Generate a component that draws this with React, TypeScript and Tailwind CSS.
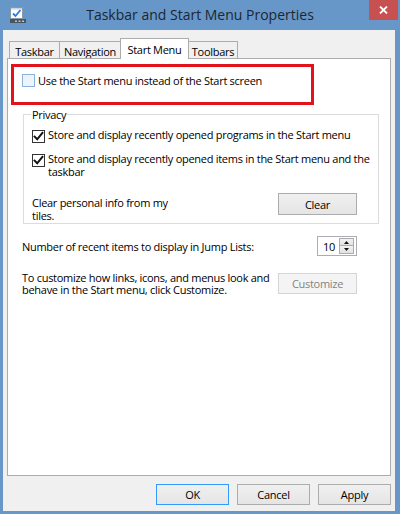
import React from "react";

const font = { fontFamily: '"Open Sans", "Noto Sans", sans-serif' };

function CheckBox({ checked, hot }: { checked?: boolean; hot?: boolean }) {
  return (
    <div
      className={
        "w-[13px] h-[13px] shrink-0 border flex items-center justify-center " +
        (hot ? "border-[#8AB2DC] bg-[#EEF4FB]" : "border-[#333333] bg-white")
      }
    >
      {checked && (
        <svg width="11" height="11" viewBox="0 0 11 11">
          <path d="M1.6 5.6 L4.2 8.3 L9.4 1.8" fill="none" stroke="#111" strokeWidth="2" strokeLinecap="square" />
        </svg>
      )}
    </div>
  );
}

function WinButton({ label, w, h = "h-[21px]", primary, disabled }: { label: string; w: string; h?: string; primary?: boolean; disabled?: boolean }) {
  let cls = "border-[#ACACAC] bg-gradient-to-b from-[#F0F0F0] to-[#E5E5E5] text-black";
  if (primary) cls = "border-[#3399FF] bg-gradient-to-b from-[#F0F0F0] to-[#E5E5E5] text-black";
  if (disabled) cls = "border-[#D5D5D5] bg-[#F4F4F4] text-[#838383]";
  return (
    <button className={`${w} ${h} shrink-0 border flex items-center justify-center text-[11px] tracking-[-0.28px] leading-none ${cls}`}>
      {label}
    </button>
  );
}

function Tab({ label, w, active, first }: { label: string; w: string; active?: boolean; first?: boolean }) {
  return (
    <div
      className={
        `${w} border border-b-0 border-[#ACACAC] flex justify-center text-[11px] tracking-[-0.28px] leading-[13px] ` +
        (first ? "" : "-ml-px ") +
        (active ? "h-[21px] bg-white relative z-10 -mb-px pt-[4px]" : "h-[17px] bg-[#F0F0F0] pt-[3px]")
      }
    >
      {label}
    </div>
  );
}

function AppIcon() {
  return (
    <svg width="16" height="17" viewBox="0 0 16 17">
      <rect x="0.5" y="0.5" width="12" height="11" fill="#fff" stroke="#8a99a8" />
      <rect x="1" y="1" width="11" height="1.5" fill="#c8d4e0" />
      <path d="M3 6.5 L5.5 9 L10.5 3" fill="none" stroke="#2a7fd4" strokeWidth="1.8" />
      <rect x="0" y="12" width="16" height="4" fill="#4a5360" />
      <rect x="5" y="13.5" width="2" height="1.5" fill="#b7c2cc" />
      <rect x="8.5" y="13.5" width="2" height="1.5" fill="#b7c2cc" />
      <rect x="12" y="13.5" width="2" height="1.5" fill="#b7c2cc" />
    </svg>
  );
}

export default function App() {
  return (
    <div className="w-[400px] h-[514px] bg-[#6797C8] flex flex-col overflow-hidden text-black" style={font}>
      {/* Title bar */}
      <div className="h-[30px] shrink-0 grid grid-cols-[1fr_auto_1fr]">
        <div className="pl-[10px] pt-[7px]">
          <AppIcon />
        </div>
        <div className="text-[14px] leading-[30px] text-[#1E2630]">Taskbar and Start Menu Properties</div>
        <div className="flex justify-end items-start pr-[2px]">
          <div className="w-[29px] h-[20px] bg-[#C75050] flex items-center justify-center">
            <svg width="9" height="8" viewBox="0 0 9 8">
              <path d="M1 0.5 L8 7.5 M8 0.5 L1 7.5" stroke="#fff" strokeWidth="1.8" />
            </svg>
          </div>
        </div>
      </div>

      {/* Client area */}
      <div className="flex-1 ml-[3px] mr-[5px] mb-[3px] bg-[#F0F0F0] flex flex-col px-[4px] pt-[8px] pb-[6px]">
        <div className="h-[20px] flex items-end pl-[2px]">
          <Tab label="Taskbar" w="w-[51px]" first />
          <Tab label="Navigation" w="w-[62px]" />
          <Tab label="Start Menu" w="w-[69px]" active />
          <Tab label="Toolbars" w="w-[50px]" />
        </div>

        <div className="h-[418px] border border-[#ACACAC] bg-white text-[11px] tracking-[-0.28px] leading-[13px]">
          {/* highlighted option */}
          <div className="mt-[5px] ml-[3px] w-[303px] h-[41px] border-[3px] border-[#E3131B] pl-[8px] pt-[7px]">
            <div className="flex items-center gap-[3px]">
              <CheckBox hot />
              <span>Use the Start menu instead of the Start screen</span>
            </div>
          </div>

          {/* Privacy group */}
          <fieldset className="mt-[3px] ml-[15px] w-[356px] min-w-0 border border-[#DCDCDC] pl-[8px] pr-[21px] pb-[1px]">
            <legend className="ml-[-1px] px-[1px]">Privacy</legend>
            <div className="mt-[7px] flex items-start gap-[3px]">
              <div className="mt-[2px]">
                <CheckBox checked />
              </div>
              <span className="whitespace-nowrap">Store and display recently opened programs in the Start menu</span>
            </div>
            <div className="mt-[9px] flex items-start gap-[3px]">
              <div className="mt-[2px]">
                <CheckBox checked />
              </div>
              <span className="whitespace-nowrap">
                Store and display recently opened items in the Start menu and the
                <br />
                taskbar
              </span>
            </div>
            <div className="mt-[15px] flex items-start justify-between">
              <span className="mt-[3px]">
                Clear personal info from my
                <br />
                tiles.
              </span>
              <WinButton label="Clear" w="w-[79px]" h="h-[22px]" />
            </div>
          </fieldset>

          <div className="pl-[14px] pr-[33px]">
            <div className="mt-[12px] flex items-center justify-between">
              <span>Number of recent items to display in Jump Lists:</span>
              <div className="w-[40px] h-[20px] border border-[#ABADB3] bg-white flex items-center">
                <span className="flex-1 text-right pr-[4px] leading-none">10</span>
                <div className="w-[15px] h-[16px] mr-[2px] flex flex-col">
                  <div className="h-[8px] border border-[#ACACAC] bg-gradient-to-b from-[#F2F2F2] to-[#E2E2E2] flex items-center justify-center">
                    <svg width="5" height="3" viewBox="0 0 5 3">
                      <path d="M0 3 L2.5 0 L5 3 Z" fill="#111" />
                    </svg>
                  </div>
                  <div className="h-[8px] border border-t-0 border-[#ACACAC] bg-gradient-to-b from-[#F2F2F2] to-[#E2E2E2] flex items-center justify-center">
                    <svg width="5" height="3" viewBox="0 0 5 3">
                      <path d="M0 0 L2.5 3 L5 0 Z" fill="#111" />
                    </svg>
                  </div>
                </div>
              </div>
            </div>

            <div className="mt-[17px] flex items-start justify-between">
              <span className="whitespace-nowrap -mt-[1px] leading-[12px]">
                To customize how links, icons, and menus look and
                <br />
                behave in the Start menu, click Customize.
              </span>
              <WinButton label="Customize" w="w-[79px]" disabled />
            </div>
          </div>
        </div>

        <div className="mt-[8px] flex justify-end gap-[8px]">
          <WinButton label="OK" w="w-[73px]" primary />
          <WinButton label="Cancel" w="w-[73px]" />
          <WinButton label="Apply" w="w-[73px]" />
        </div>
      </div>
    </div>
  );
}
